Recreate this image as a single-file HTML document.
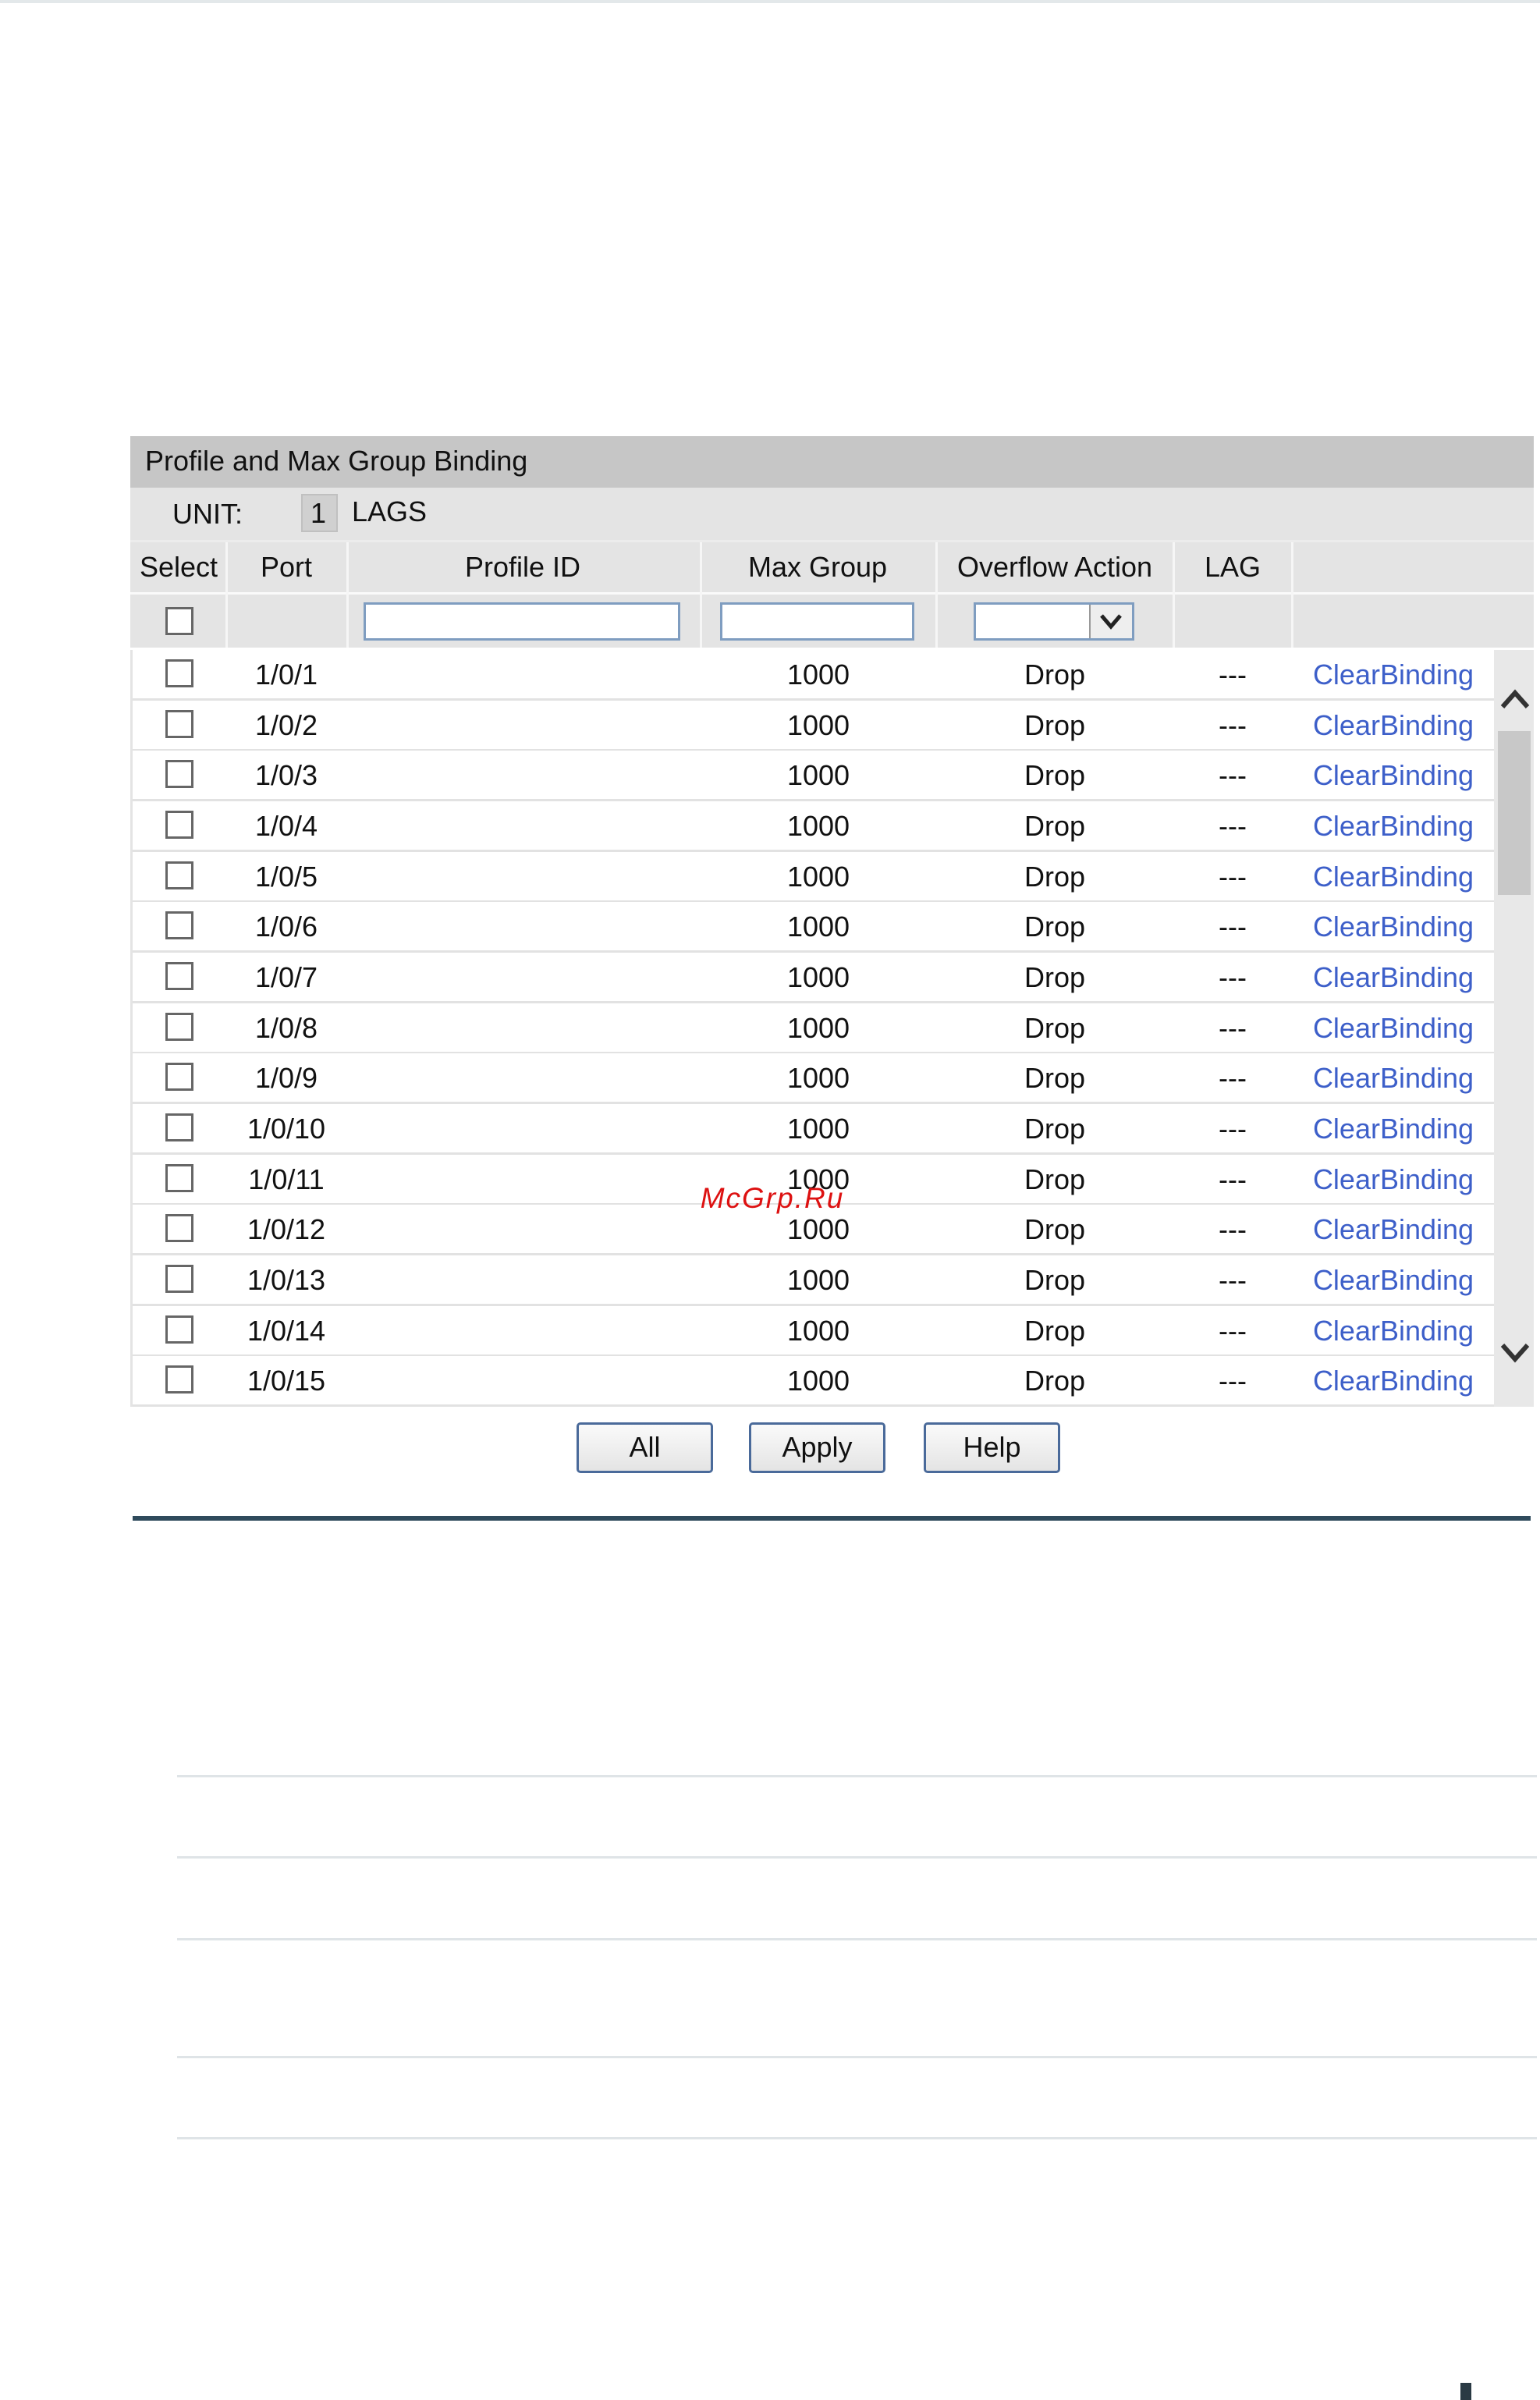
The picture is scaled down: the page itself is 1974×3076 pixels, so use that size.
<!DOCTYPE html>
<html><head><meta charset="utf-8"><style>
*{margin:0;padding:0;box-sizing:border-box}
body{width:1974px;height:3076px;background:#fff;position:relative;font-family:"Liberation Sans Narrow","Liberation Sans",sans-serif;color:#111;overflow:hidden}
.a{position:absolute}
.t{font-size:36px;line-height:1;white-space:nowrap}
.c{transform:translateX(-50%)}
.cb{position:absolute;width:36px;height:36px;border:3px solid #666;background:#fff;left:212px}
.row{position:absolute;left:167px;width:1748px;height:65px;border-bottom:3px solid #e2e2e2;background:#fff}
.row span{position:absolute;top:14px;font-size:36px;line-height:1;white-space:nowrap;transform:translateX(-50%)}
.lnk{color:#3d5fc9}
.btn{position:absolute;top:1823px;height:65px;width:175px;border:3px solid #4a6a9a;border-radius:5px;background:linear-gradient(#fafafa,#e4e4e4);font-size:36px;text-align:center;line-height:58px}
.gl{position:absolute;left:227px;width:1743px;height:3px;background:#dfe4e7}
.vs{position:absolute;width:3px;background:#f6f6f6}
</style></head><body>
<div class="a" style="left:0;top:0;width:1974px;height:4px;background:#e3e8ea"></div>
<div class="a" style="left:167px;top:559px;width:1799px;height:66px;background:#c6c6c6"></div>
<div class="a t" style="left:186px;top:573px">Profile and Max Group Binding</div>
<div class="a" style="left:167px;top:625px;width:1799px;height:205px;background:#e4e4e4"></div>
<div class="a t" style="left:221px;top:641px">UNIT:</div>
<div class="a" style="left:386px;top:633px;width:47px;height:49px;background:#d0d0d0;border:2px solid #c0c0c0"></div>
<div class="a t" style="left:398px;top:640px">1</div>
<div class="a t" style="left:451px;top:638px">LAGS</div>
<div class="a" style="left:167px;top:692px;width:1799px;height:3px;background:#ececec"></div>
<div class="a" style="left:167px;top:759px;width:1799px;height:3px;background:#fafafa"></div>
<div class="vs" style="left:289px;top:695px;height:135px"></div>
<div class="vs" style="left:444px;top:695px;height:135px"></div>
<div class="vs" style="left:897px;top:695px;height:135px"></div>
<div class="vs" style="left:1199px;top:695px;height:135px"></div>
<div class="vs" style="left:1503px;top:695px;height:135px"></div>
<div class="vs" style="left:1655px;top:695px;height:135px"></div>
<div class="a t c" style="left:229px;top:709px">Select</div>
<div class="a t c" style="left:367px;top:709px">Port</div>
<div class="a t c" style="left:670px;top:709px">Profile ID</div>
<div class="a t c" style="left:1048px;top:709px">Max Group</div>
<div class="a t c" style="left:1352px;top:709px">Overflow Action</div>
<div class="a t c" style="left:1580px;top:709px">LAG</div>
<div class="cb" style="top:778px"></div>
<div class="a" style="left:466px;top:772px;width:406px;height:49px;background:#fff;border:3px solid #7f9dc0"></div>
<div class="a" style="left:923px;top:772px;width:249px;height:49px;background:#fff;border:3px solid #7f9dc0"></div>
<div class="a" style="left:1248px;top:772px;width:206px;height:49px;background:#fff;border:3px solid #7f9dc0"></div>
<div class="a" style="left:1396px;top:775px;width:55px;height:43px;background:#eee;border-left:2px solid #999"></div>
<svg class="a" style="left:1408px;top:785px" width="32" height="24"><path d="M4 4 L16 18 L28 4" stroke="#222" stroke-width="5" fill="none"/></svg>
<div class="row" style="top:833px"><div class="cb" style="top:12px;left:45px"></div><span style="left:200px">1/0/1</span><span style="left:882px">1000</span><span style="left:1185px">Drop</span><span style="left:1413px">---</span><span class="lnk" style="left:1619px">ClearBinding</span></div>
<div class="row" style="top:898px"><div class="cb" style="top:12px;left:45px"></div><span style="left:200px">1/0/2</span><span style="left:882px">1000</span><span style="left:1185px">Drop</span><span style="left:1413px">---</span><span class="lnk" style="left:1619px">ClearBinding</span></div>
<div class="row" style="top:962px"><div class="cb" style="top:12px;left:45px"></div><span style="left:200px">1/0/3</span><span style="left:882px">1000</span><span style="left:1185px">Drop</span><span style="left:1413px">---</span><span class="lnk" style="left:1619px">ClearBinding</span></div>
<div class="row" style="top:1027px"><div class="cb" style="top:12px;left:45px"></div><span style="left:200px">1/0/4</span><span style="left:882px">1000</span><span style="left:1185px">Drop</span><span style="left:1413px">---</span><span class="lnk" style="left:1619px">ClearBinding</span></div>
<div class="row" style="top:1092px"><div class="cb" style="top:12px;left:45px"></div><span style="left:200px">1/0/5</span><span style="left:882px">1000</span><span style="left:1185px">Drop</span><span style="left:1413px">---</span><span class="lnk" style="left:1619px">ClearBinding</span></div>
<div class="row" style="top:1156px"><div class="cb" style="top:12px;left:45px"></div><span style="left:200px">1/0/6</span><span style="left:882px">1000</span><span style="left:1185px">Drop</span><span style="left:1413px">---</span><span class="lnk" style="left:1619px">ClearBinding</span></div>
<div class="row" style="top:1221px"><div class="cb" style="top:12px;left:45px"></div><span style="left:200px">1/0/7</span><span style="left:882px">1000</span><span style="left:1185px">Drop</span><span style="left:1413px">---</span><span class="lnk" style="left:1619px">ClearBinding</span></div>
<div class="row" style="top:1286px"><div class="cb" style="top:12px;left:45px"></div><span style="left:200px">1/0/8</span><span style="left:882px">1000</span><span style="left:1185px">Drop</span><span style="left:1413px">---</span><span class="lnk" style="left:1619px">ClearBinding</span></div>
<div class="row" style="top:1350px"><div class="cb" style="top:12px;left:45px"></div><span style="left:200px">1/0/9</span><span style="left:882px">1000</span><span style="left:1185px">Drop</span><span style="left:1413px">---</span><span class="lnk" style="left:1619px">ClearBinding</span></div>
<div class="row" style="top:1415px"><div class="cb" style="top:12px;left:45px"></div><span style="left:200px">1/0/10</span><span style="left:882px">1000</span><span style="left:1185px">Drop</span><span style="left:1413px">---</span><span class="lnk" style="left:1619px">ClearBinding</span></div>
<div class="row" style="top:1480px"><div class="cb" style="top:12px;left:45px"></div><span style="left:200px">1/0/11</span><span style="left:882px">1000</span><span style="left:1185px">Drop</span><span style="left:1413px">---</span><span class="lnk" style="left:1619px">ClearBinding</span></div>
<div class="row" style="top:1544px"><div class="cb" style="top:12px;left:45px"></div><span style="left:200px">1/0/12</span><span style="left:882px">1000</span><span style="left:1185px">Drop</span><span style="left:1413px">---</span><span class="lnk" style="left:1619px">ClearBinding</span></div>
<div class="row" style="top:1609px"><div class="cb" style="top:12px;left:45px"></div><span style="left:200px">1/0/13</span><span style="left:882px">1000</span><span style="left:1185px">Drop</span><span style="left:1413px">---</span><span class="lnk" style="left:1619px">ClearBinding</span></div>
<div class="row" style="top:1674px"><div class="cb" style="top:12px;left:45px"></div><span style="left:200px">1/0/14</span><span style="left:882px">1000</span><span style="left:1185px">Drop</span><span style="left:1413px">---</span><span class="lnk" style="left:1619px">ClearBinding</span></div>
<div class="row" style="top:1738px"><div class="cb" style="top:12px;left:45px"></div><span style="left:200px">1/0/15</span><span style="left:882px">1000</span><span style="left:1185px">Drop</span><span style="left:1413px">---</span><span class="lnk" style="left:1619px">ClearBinding</span></div>
<div class="a" style="left:167px;top:833px;width:3px;height:970px;background:#e4e4e4"></div>
<div class="a" style="left:1915px;top:833px;width:51px;height:970px;background:#e8e8e8"></div>
<div class="a" style="left:1920px;top:937px;width:42px;height:210px;background:#c8c8c8"></div>
<svg class="a" style="left:1922px;top:882px" width="40" height="30"><path d="M4 24 L20 6 L36 24" stroke="#333" stroke-width="6" fill="none"/></svg>
<svg class="a" style="left:1922px;top:1718px" width="40" height="30"><path d="M4 6 L20 24 L36 6" stroke="#333" stroke-width="6" fill="none"/></svg>
<div class="a" style="left:990px;top:1517px;color:#d11;font-size:37px;line-height:1;font-style:italic;font-family:'Liberation Sans',sans-serif;letter-spacing:2px;transform:translateX(-50%)">McGrp.Ru</div>
<div class="btn" style="left:739px">All</div>
<div class="btn" style="left:960px">Apply</div>
<div class="btn" style="left:1184px">Help</div>
<div class="a" style="left:170px;top:1943px;width:1792px;height:6px;background:#2f4b5c"></div>
<div class="gl" style="top:2275px"></div>
<div class="gl" style="top:2379px"></div>
<div class="gl" style="top:2484px"></div>
<div class="gl" style="top:2635px"></div>
<div class="gl" style="top:2739px"></div>
<div class="a" style="left:1872px;top:3054px;width:14px;height:22px;background:#2a3a44"></div>
</body></html>
